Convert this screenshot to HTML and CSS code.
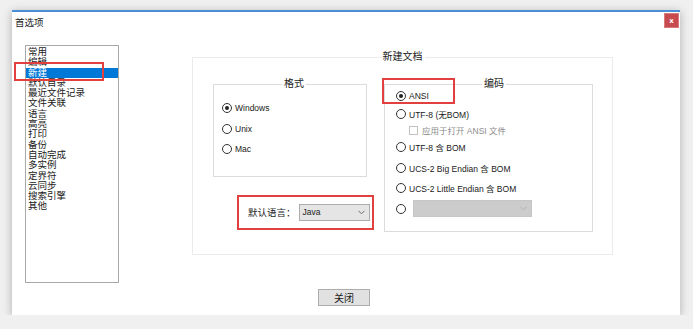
FILE: index.html
```html
<!DOCTYPE html>
<html lang="zh-CN">
<head>
  <meta charset="UTF-8" />
  <title>首选项</title>
  <link rel="stylesheet" href="styles.css">
</head>
<body>
  <div class="window">
    <div class="titlebar">
      <span class="title">首选项</span>
      <button class="close-x">x</button>
    </div>

    <div class="content">
      <ul class="nav-list">
        <li>常用</li>
        <li>编辑</li>
        <li class="selected">新建</li>
        <li>默认目录</li>
        <li>最近文件记录</li>
        <li>文件关联</li>
        <li>语言</li>
        <li>高亮</li>
        <li>打印</li>
        <li>备份</li>
        <li>自动完成</li>
        <li>多实例</li>
        <li>定界符</li>
        <li>云同步</li>
        <li>搜索引擎</li>
        <li>其他</li>
      </ul>

      <fieldset class="group">
        <legend>新建文档</legend>
        <div class="group-body">
          <div class="left-col">
            <fieldset class="box box-format">
              <legend>格式</legend>
              <div class="opt"><span class="radio checked"></span>Windows</div>
              <div class="opt"><span class="radio"></span>Unix</div>
              <div class="opt"><span class="radio"></span>Mac</div>
            </fieldset>
            <div class="lang-row">
              <span class="lang-label">默认语言：</span>
              <div class="combo">
                <span>Java</span>
                <svg width="7" height="5" viewBox="0 0 7 5"><path d="M0.5 0.8 L3.5 3.8 L6.5 0.8" fill="none" stroke="#6a6a6a" stroke-width="1"/></svg>
              </div>
            </div>
          </div>

          <fieldset class="box box-enc">
            <legend>编码</legend>
            <div class="opts">
              <div class="opt short"><span class="radio checked"></span>ANSI</div>
              <div class="opt short"><span class="radio"></span>UTF-8 (无BOM)</div>
              <div class="opt sub"><span class="check"></span>应用于打开 ANSI 文件</div>
              <div class="opt"><span class="radio"></span>UTF-8 含 BOM</div>
              <div class="opt"><span class="radio"></span>UCS-2 Big Endian 含 BOM</div>
              <div class="opt"><span class="radio"></span>UCS-2 Little Endian 含 BOM</div>
              <div class="opt">
                <span class="radio"></span>
                <div class="combo disabled">
                  <svg width="7" height="5" viewBox="0 0 7 5"><path d="M0.5 0.8 L3.5 3.8 L6.5 0.8" fill="none" stroke="#b4b4b4" stroke-width="1"/></svg>
                </div>
              </div>
            </div>
          </fieldset>
        </div>
      </fieldset>
    </div>

    <div class="footer">
      <button class="btn">关闭</button>
    </div>

    <!-- 标注框 -->
    <div class="mark mark-nav"></div>
    <div class="mark mark-ansi"></div>
  </div>
</body>
</html>
```

FILE: styles.css
```css
* { margin: 0; padding: 0; box-sizing: border-box; }
body {
  background: #f0f0f0;
  font-family: "Liberation Sans", "Noto Sans CJK SC", sans-serif;
  font-size: 8.5px;
  color: #1a1a1a;
  overflow: hidden;
}

.window {
  position: relative;
  width: 668px; height: 305px;
  margin: 10px 0 0 12px;
  background: #fff;
  border-top: 2px solid #4b8fd6;
  box-shadow: 0 2px 9px rgba(0,0,0,0.28);
  display: flex; flex-direction: column;
}

/* 标题栏 */
.titlebar {
  height: 33px;
  display: flex; justify-content: space-between; align-items: flex-start;
  padding: 1px 1px 0 3px;
}
.title { font-size: 9.5px; line-height: 14px; margin-top: 3px; }
.close-x {
  width: 15px; height: 15px;
  background: #c74a4e; border: 1px solid #d97a7c;
  color: #fff; font-family: "DejaVu Sans", sans-serif; font-size: 7px; font-weight: bold;
  line-height: 12px; text-align: center;
}

.content { display: flex; align-items: flex-start; padding-left: 13px; }

/* 左侧列表 */
.nav-list {
  list-style: none;
  width: 94px; height: 238px;
  border: 1px solid #a9a9a9;
  padding-top: 1px;
  font-size: 9.5px; line-height: 10.3px;
}
.nav-list li { padding-left: 2px; white-space: nowrap; }
.nav-list li.selected { background: #0078d7; color: #fff; }

/* 分组框 */
fieldset { border: 1px solid #e4e4e4; min-width: 0; }
legend { margin: 0 auto; padding: 0 2px; font-size: 10px; line-height: 14px; }

.group { width: 421px; margin: 5px 0 0 73px; border-color: #ebebeb; }
.group-body { display: flex; align-items: flex-start; gap: 17px; padding: 13px 0 22px 20px; }
.left-col { width: 154px; display: flex; flex-direction: column; align-items: flex-start; }

.box { border-color: #dcdcdc; }
.box-format { width: 154px; padding: 7px 0 16px 8px; }
.box-enc { width: 209px; padding: 0 0 12px 11px; }
.opts { margin-top: -4px; }

.opt { height: 20.5px; display: flex; align-items: center; gap: 3px; white-space: nowrap; }
.opt.short { height: 18px; }
.opt.sub { height: 14px; padding-left: 13px; color: #8c8c8c; gap: 4px; }

.radio {
  width: 10px; height: 10px;
  border: 1px solid #333; border-radius: 50%;
  background: #fff;
  display: flex; align-items: center; justify-content: center;
  flex-shrink: 0;
}
.radio.checked::after { content: ""; width: 4px; height: 4px; border-radius: 50%; background: #222; }
.check { width: 9px; height: 9px; border: 1px solid #c2c2c2; background: #fff; flex-shrink: 0; }

/* 默认语言 */
.lang-row {
  display: flex; align-items: center; gap: 3px;
  width: 137px; flex-shrink: 0;
  margin: 18px 0 0 24px;
  padding: 7px 2px 7px 9px;
  border: 2px solid #e2403f;
}
.lang-label { font-size: 9.5px; white-space: nowrap; flex-shrink: 0; }
.combo {
  width: 71px; height: 17px; flex-shrink: 0;
  display: flex; align-items: center; justify-content: space-between;
  padding: 0 4px 0 3px;
  background: #e5e5e5; border: 1px solid #acacac;
}
.combo.disabled { width: 119px; margin-left: 4px; background: #cccccc; border-color: #c6c6c6; justify-content: flex-end; }

/* 底部按钮 */
.footer { display: flex; justify-content: center; padding: 6px 4px 0 0; }
.btn {
  width: 52px; height: 17px;
  background: #e1e1e1; border: 1px solid #adadad;
  font-family: inherit; font-size: 10px; color: #1a1a1a;
}

/* 红色标注框 */
.mark { position: absolute; border: 2px solid #e2403f; }
.mark-nav { left: 2px; top: 50px; width: 90px; height: 19px; }
.mark-ansi { left: 370px; top: 66px; width: 73px; height: 26px; }
```
